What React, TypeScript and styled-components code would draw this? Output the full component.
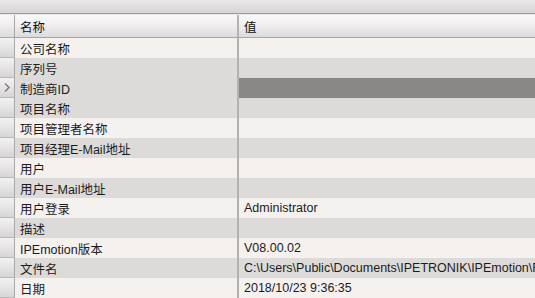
import styled, { createGlobalStyle } from 'styled-components';

const GlobalStyle = createGlobalStyle`
  html, body {
    margin: 0;
    padding: 0;
    background: #f4f1ef;
  }
  body {
    font-family: "Liberation Sans", "Noto Sans CJK SC", sans-serif;
    font-size: 12.5px;
    color: #1c1c1c;
    overflow: hidden;
  }
`;

const Page = styled.div`
  width: 535px;
  height: 298px;
  display: flex;
  flex-direction: column;
  overflow: hidden;
  background: #f4f1ef;
`;

const TopBand = styled.div`
  height: 13px;
  flex: none;
  background: linear-gradient(#e9e7e7, #d7d5d5);
  border-bottom: 1px solid #9c9c9c;
`;

const Gap = styled.div`
  height: 1px;
  flex: none;
  background: #ebe9e9;
`;

const HeaderRow = styled.div`
  display: flex;
  height: 22px;
  flex: none;
  background: linear-gradient(#f9f8f8 0%, #f2f0f0 40%, #dcdada 100%);
  border-bottom: 1px solid #a9a7a5;
`;

const Row = styled.div<{ $shade: boolean }>`
  display: flex;
  height: 20px;
  flex: none;
  background: ${(p) => (p.$shade ? '#dcdbda' : '#f4f1ef')};
`;

const RowHeader = styled.div`
  width: 15px;
  flex: none;
  display: flex;
  align-items: center;
  justify-content: center;
  background: linear-gradient(#f3f2f2 0%, #e6e4e4 50%, #d6d4d4 100%);
  border-right: 1px solid #a8a8a8;
  border-bottom: 1px solid #b9b9b9;
  box-sizing: border-box;
`;

const CornerCell = styled(RowHeader)`
  border-bottom: none;
  background: transparent;
`;

const NameCell = styled.div`
  width: 224px;
  flex: none;
  display: flex;
  align-items: center;
  padding-left: 5px;
  box-sizing: border-box;
  border-right: 2px solid #b3b2b1;
  white-space: nowrap;
  overflow: hidden;
`;

const ValueCell = styled.div<{ $selected?: boolean }>`
  flex: 1;
  display: flex;
  align-items: center;
  padding-left: 5px;
  white-space: nowrap;
  overflow: hidden;
  background: ${(p) => (p.$selected ? '#888785' : 'transparent')};
`;

const HeaderText = styled.span`
  color: #111;
`;

const rows: { name: string; value: string }[] = [
  { name: '公司名称', value: '' },
  { name: '序列号', value: '' },
  { name: '制造商ID', value: '' },
  { name: '项目名称', value: '' },
  { name: '项目管理者名称', value: '' },
  { name: '项目经理E-Mail地址', value: '' },
  { name: '用户', value: '' },
  { name: '用户E-Mail地址', value: '' },
  { name: '用户登录', value: 'Administrator' },
  { name: '描述', value: '' },
  { name: 'IPEmotion版本', value: 'V08.00.02' },
  { name: '文件名', value: 'C:\\Users\\Public\\Documents\\IPETRONIK\\IPEmotion\\R' },
  { name: '日期', value: '2018/10/23 9:36:35' },
];

const SELECTED = 2;

function Chevron() {
  return (
    <svg width="6" height="9" viewBox="0 0 6 9">
      <path d="M1 0.5 L5 4.5 L1 8.5" fill="none" stroke="#7a7a7a" strokeWidth="1.4" />
    </svg>
  );
}

export default function App() {
  return (
    <Page>
      <GlobalStyle />
      <TopBand />
      <Gap />
      <HeaderRow>
        <CornerCell />
        <NameCell>
          <HeaderText>名称</HeaderText>
        </NameCell>
        <ValueCell>
          <HeaderText>值</HeaderText>
        </ValueCell>
      </HeaderRow>
      {rows.map((r, i) => (
        <Row key={r.name} $shade={i % 2 === 1 || i === SELECTED}>
          <RowHeader>{i === SELECTED && <Chevron />}</RowHeader>
          <NameCell>{r.name}</NameCell>
          <ValueCell $selected={i === SELECTED}>{r.value}</ValueCell>
        </Row>
      ))}
    </Page>
  );
}
